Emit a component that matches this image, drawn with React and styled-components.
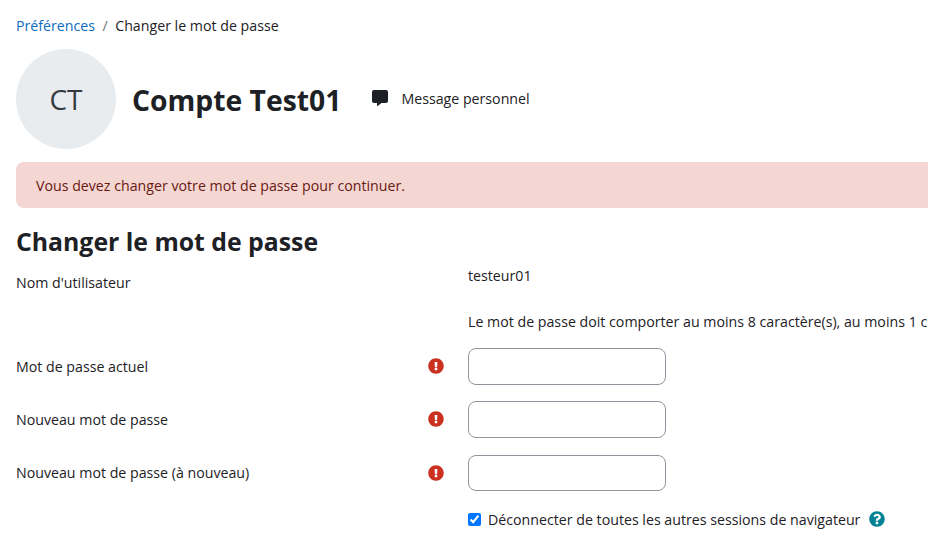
import React from "react";
import styled, { createGlobalStyle } from "styled-components";
import { FaCommentAlt, FaExclamationCircle, FaQuestionCircle } from "react-icons/fa";

const GlobalStyle = createGlobalStyle`
  html, body {
    margin: 0;
    padding: 0;
    background: #fff;
    overflow: hidden;
  }

  body {
    font-family: "Open Sans", "Noto Sans", sans-serif;
    font-size: 14.2px;
    color: #1d2125;
  }
`;

const Page = styled.div`
  width: 1300px;
  padding: 15px 0 0 16px;
  box-sizing: border-box;
`;

const Breadcrumb = styled.nav`
  display: flex;
  align-items: center;
  height: 20px;
  white-space: nowrap;
`;

const Crumb = styled.a`
  color: #0f6cbf;
  text-decoration: none;
`;

const Separator = styled.span`
  margin: 0 7.5px;
  color: #6a737b;
`;

const Header = styled.header`
  display: flex;
  align-items: center;
  margin-top: 14px;
`;

const Avatar = styled.div`
  width: 100px;
  height: 100px;
  border-radius: 50%;
  background: #e9ecef;
  color: #343a40;
  font-size: 28px;
  display: flex;
  align-items: center;
  justify-content: center;
`;

const Name = styled.h1`
  margin: 2px 0 0 16px;
  font-size: 28.3px;
  font-weight: 700;
`;

const MessageLink = styled.a`
  display: flex;
  align-items: center;
  margin: 0 0 2px 31px;
  color: #1d2125;
  text-decoration: none;
  svg {
    width: 16px;
    height: 16px;
    margin-right: 13px;
  }
`;

const Alert = styled.div`
  margin-top: 13px;
  height: 46px;
  padding-left: 20px;
  display: flex;
  align-items: center;
  background: #f4d6d2;
  color: #691911;
  border-radius: 8px;
`;

const Title = styled.h2`
  margin: 17px 0 0;
  font-size: 24.8px;
  line-height: 32px;
  font-weight: 700;
`;

const Row = styled.div`
  display: grid;
  grid-template-columns: 452px 1fr;
  align-items: ${(p) => p.$align || "center"};
  margin-top: ${(p) => p.$top || 0}px;
  height: ${(p) => p.$height}px;
`;

const Label = styled.label`
  display: flex;
  align-items: center;
  justify-content: space-between;
  padding-right: 24px;
  margin-top: ${(p) => p.$offset || 0}px;
`;

const Required = styled.span`
  display: flex;
  color: #ca3120;
  svg {
    width: 16px;
    height: 16px;
  }
`;

const StaticText = styled.div`
  white-space: nowrap;
  margin-top: ${(p) => p.$offset || 0}px;
`;

const Input = styled.input`
  display: block;
  box-sizing: border-box;
  width: 198px;
  height: 36.5px;
  padding: 0 12px;
  background: #fff;
  border: 1px solid #8f959e;
  border-radius: 8px;
`;

const CheckLine = styled.label`
  display: flex;
  align-items: center;
  white-space: nowrap;
`;

const Check = styled.input`
  width: 13px;
  height: 13px;
  margin: 0 7px 0 0;
  accent-color: #0075ff;
`;

const Help = styled.span`
  display: flex;
  margin-left: 9px;
  color: #008196;
  svg {
    width: 16px;
    height: 16px;
  }
`;

const passwordFields = [
  { label: "Mot de passe actuel", top: 9 },
  { label: "Nouveau mot de passe", top: 16.7 },
  { label: "Nouveau mot de passe (à nouveau)", top: 17 },
];

export default function App() {
  return (
    <>
      <GlobalStyle />
      <Page>
        <Breadcrumb>
          <Crumb href="#">Préférences</Crumb>
          <Separator>/</Separator>
          <span>Changer le mot de passe</span>
        </Breadcrumb>

        <Header>
          <Avatar>CT</Avatar>
          <Name>Compte Test01</Name>
          <MessageLink href="#">
            <FaCommentAlt />
            Message personnel
          </MessageLink>
        </Header>

        <Alert>Vous devez changer votre mot de passe pour continuer.</Alert>

        <Title>Changer le mot de passe</Title>

        <Row $top={7} $height={36} $align="start">
          <Label $offset={9}>Nom d'utilisateur</Label>
          <StaticText $offset={2}>testeur01</StaticText>
        </Row>
        <Row $top={3} $height={36}>
          <span />
          <StaticText>
            Le mot de passe doit comporter au moins 8 caractère(s), au moins 1 chiffre(s), au moins 1 minuscule(s), au moins 1 majuscule(s)
          </StaticText>
        </Row>

        {passwordFields.map((field) => (
          <Row key={field.label} $top={field.top} $height={36.5}>
            <Label>
              {field.label}
              <Required>
                <FaExclamationCircle />
              </Required>
            </Label>
            <Input type="password" />
          </Row>
        ))}

        <Row $top={17} $height={22}>
          <span />
          <CheckLine>
            <Check type="checkbox" defaultChecked />
            Déconnecter de toutes les autres sessions de navigateur
            <Help>
              <FaQuestionCircle />
            </Help>
          </CheckLine>
        </Row>
      </Page>
    </>
  );
}
